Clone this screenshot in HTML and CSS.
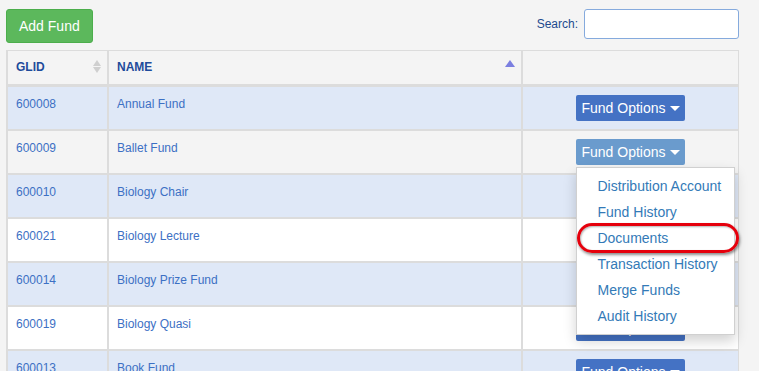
FILE: index.html
```html
<!DOCTYPE html>
<html lang="en">
<head>
    <meta charset="UTF-8">
    <meta name="viewport" content="width=device-width, initial-scale=1.0">
    <title>Funds</title>
    <link rel="stylesheet" href="styles.css">
</head>
<body>
    <div class="page">
        <div class="toolbar">
            <button class="btn-add">Add Fund</button>
            <label class="search">Search: <input type="text" class="search-input"></label>
        </div>
        <table class="funds">
            <thead>
                <tr>
                    <th class="col-id"><div class="th-inner">GLID <span class="sort"><i class="up"></i><i class="down"></i></span></div></th>
                    <th class="col-name"><div class="th-inner">NAME <span class="sort active"><i class="up"></i><i class="down"></i></span></div></th>
                    <th class="col-opts"></th>
                </tr>
            </thead>
            <tbody>
                <tr class="odd">
                    <td><a href="#">600008</a></td>
                    <td><a href="#">Annual Fund</a></td>
                    <td class="opts"><div class="dropdown"><button class="btn-opts">Fund Options <span class="caret"></span></button></div></td>
                </tr>
                <tr class="hover">
                    <td><a href="#">600009</a></td>
                    <td><a href="#">Ballet Fund</a></td>
                    <td class="opts">
                        <div class="dropdown">
                            <button class="btn-opts open">Fund Options <span class="caret"></span></button>
                            <ul class="menu">
                                <li><a href="#">Distribution Account</a></li>
                                <li><a href="#">Fund History</a></li>
                                <li class="marked"><a href="#">Documents</a><span class="ring"></span></li>
                                <li><a href="#">Transaction History</a></li>
                                <li><a href="#">Merge Funds</a></li>
                                <li><a href="#">Audit History</a></li>
                            </ul>
                        </div>
                    </td>
                </tr>
                <tr class="odd">
                    <td><a href="#">600010</a></td>
                    <td><a href="#">Biology Chair</a></td>
                    <td class="opts"><div class="dropdown"><button class="btn-opts">Fund Options <span class="caret"></span></button></div></td>
                </tr>
                <tr>
                    <td><a href="#">600021</a></td>
                    <td><a href="#">Biology Lecture</a></td>
                    <td class="opts"><div class="dropdown"><button class="btn-opts">Fund Options <span class="caret"></span></button></div></td>
                </tr>
                <tr class="odd">
                    <td><a href="#">600014</a></td>
                    <td><a href="#">Biology Prize Fund</a></td>
                    <td class="opts"><div class="dropdown"><button class="btn-opts">Fund Options <span class="caret"></span></button></div></td>
                </tr>
                <tr>
                    <td><a href="#">600019</a></td>
                    <td><a href="#">Biology Quasi</a></td>
                    <td class="opts"><div class="dropdown"><button class="btn-opts">Fund Options <span class="caret"></span></button></div></td>
                </tr>
                <tr class="odd">
                    <td><a href="#">600013</a></td>
                    <td><a href="#">Book Fund</a></td>
                    <td class="opts"><div class="dropdown"><button class="btn-opts">Fund Options <span class="caret"></span></button></div></td>
                </tr>
            </tbody>
        </table>
    </div>
</body>
</html>
```

FILE: styles.css
```css
html, body {
    margin: 0;
    background-color: #f4f4f4;
    overflow: hidden;
}
body {
    font-family: "Liberation Sans", Arial, sans-serif;
    font-size: 12px;
}
.page {
    width: 733px;
    padding: 9px 0 0 6px;
}
.toolbar {
    display: flex;
    justify-content: space-between;
    align-items: flex-start;
    height: 34px;
    margin-bottom: 7px;
}
.btn-add {
    height: 34px;
    padding: 0 12px;
    font-family: inherit;
    font-size: 14px;
    color: white;
    background-color: #5cb85c;
    border: 1px solid #4cae4c;
    border-radius: 3px;
}
.search {
    display: flex;
    align-items: center;
    gap: 6px;
    color: #1d4a8e;
    font-size: 12px;
}
.search-input {
    box-sizing: border-box;
    width: 155px;
    height: 30px;
    border: 1px solid #85aadd;
    border-radius: 3px;
    background-color: white;
}
.funds {
    width: 733px;
    table-layout: fixed;
    border-collapse: separate;
    border-spacing: 0;
    border-top: 1px solid #dcdcdc;
    border-right: 1px solid #dcdcdc;
}
.funds th,
.funds td {
    box-sizing: border-box;
    border-left: 2px solid #dcdcdc;
    border-bottom: 2px solid #dcdcdc;
    padding: 8px;
    text-align: left;
    vertical-align: top;
}
.funds th {
    background-color: #f4f4f4;
    border-bottom-width: 3px;
    color: #1e4b9b;
    font-weight: bold;
    line-height: 17px;
    padding-right: 6px;
}
.col-id { width: 101px; }
.col-name { width: 414px; }
.col-opts { width: 217px; }
.th-inner {
    display: flex;
    justify-content: space-between;
    align-items: center;
}
.sort {
    display: flex;
    flex-direction: column;
    gap: 1px;
    margin-top: -2px;
}
.sort i {
    display: block;
    width: 0;
    height: 0;
    border-left: 4px solid transparent;
    border-right: 4px solid transparent;
}
.sort .up { border-bottom: 6px solid #cfcfcf; }
.sort .down { border-top: 6px solid #cfcfcf; }
.sort.active i {
    border-left-width: 5px;
    border-right-width: 5px;
}
.sort.active .up { border-bottom: 7px solid #7b7fe0; }
.sort.active .down { border-top-color: transparent; }
.funds td {
    background-color: white;
    line-height: 18px;
}
.funds tr.odd td {
    background-color: #dfe8f7;
}
.funds tr.hover td {
    background-color: #f4f4f4;
}
.funds td a {
    color: #3c70c4;
    text-decoration: none;
}
.funds td.opts {
    text-align: center;
}
.dropdown {
    position: relative;
    display: inline-block;
    vertical-align: top;
    text-align: left;
}
.btn-opts {
    display: inline-flex;
    align-items: center;
    gap: 4px;
    height: 26px;
    padding: 0 5px 0 5px;
    font-family: inherit;
    font-size: 14px;
    color: white;
    background-color: #4472c4;
    border: none;
    border-radius: 2px;
    vertical-align: top;
}
.btn-opts.open {
    background-color: #6a9bcd;
}
.caret {
    width: 0;
    height: 0;
    border-top: 5px solid white;
    border-left: 5px solid transparent;
    border-right: 5px solid transparent;
}
.menu {
    position: absolute;
    top: 28px;
    left: 0;
    z-index: 10;
    width: 159px;
    box-sizing: border-box;
    margin: 0;
    padding: 5px 0;
    list-style: none;
    background-color: white;
    border: 1px solid #d0d0d0;
    box-shadow: 0 6px 12px rgba(0, 0, 0, 0.18);
}
.menu li {
    position: relative;
    padding-left: 20px;
    line-height: 26px;
    font-size: 14px;
    white-space: nowrap;
}
.menu li a {
    color: #337ab7;
    text-decoration: none;
}
.ring {
    position: absolute;
    top: -2px;
    bottom: -2px;
    left: 0;
    right: -5px;
    border: 3px solid #e5000c;
    border-radius: 15px;
    box-shadow: 1px 2px 3px rgba(0, 0, 0, 0.45), inset 1px 1px 2px rgba(0, 0, 0, 0.3);
}
```
